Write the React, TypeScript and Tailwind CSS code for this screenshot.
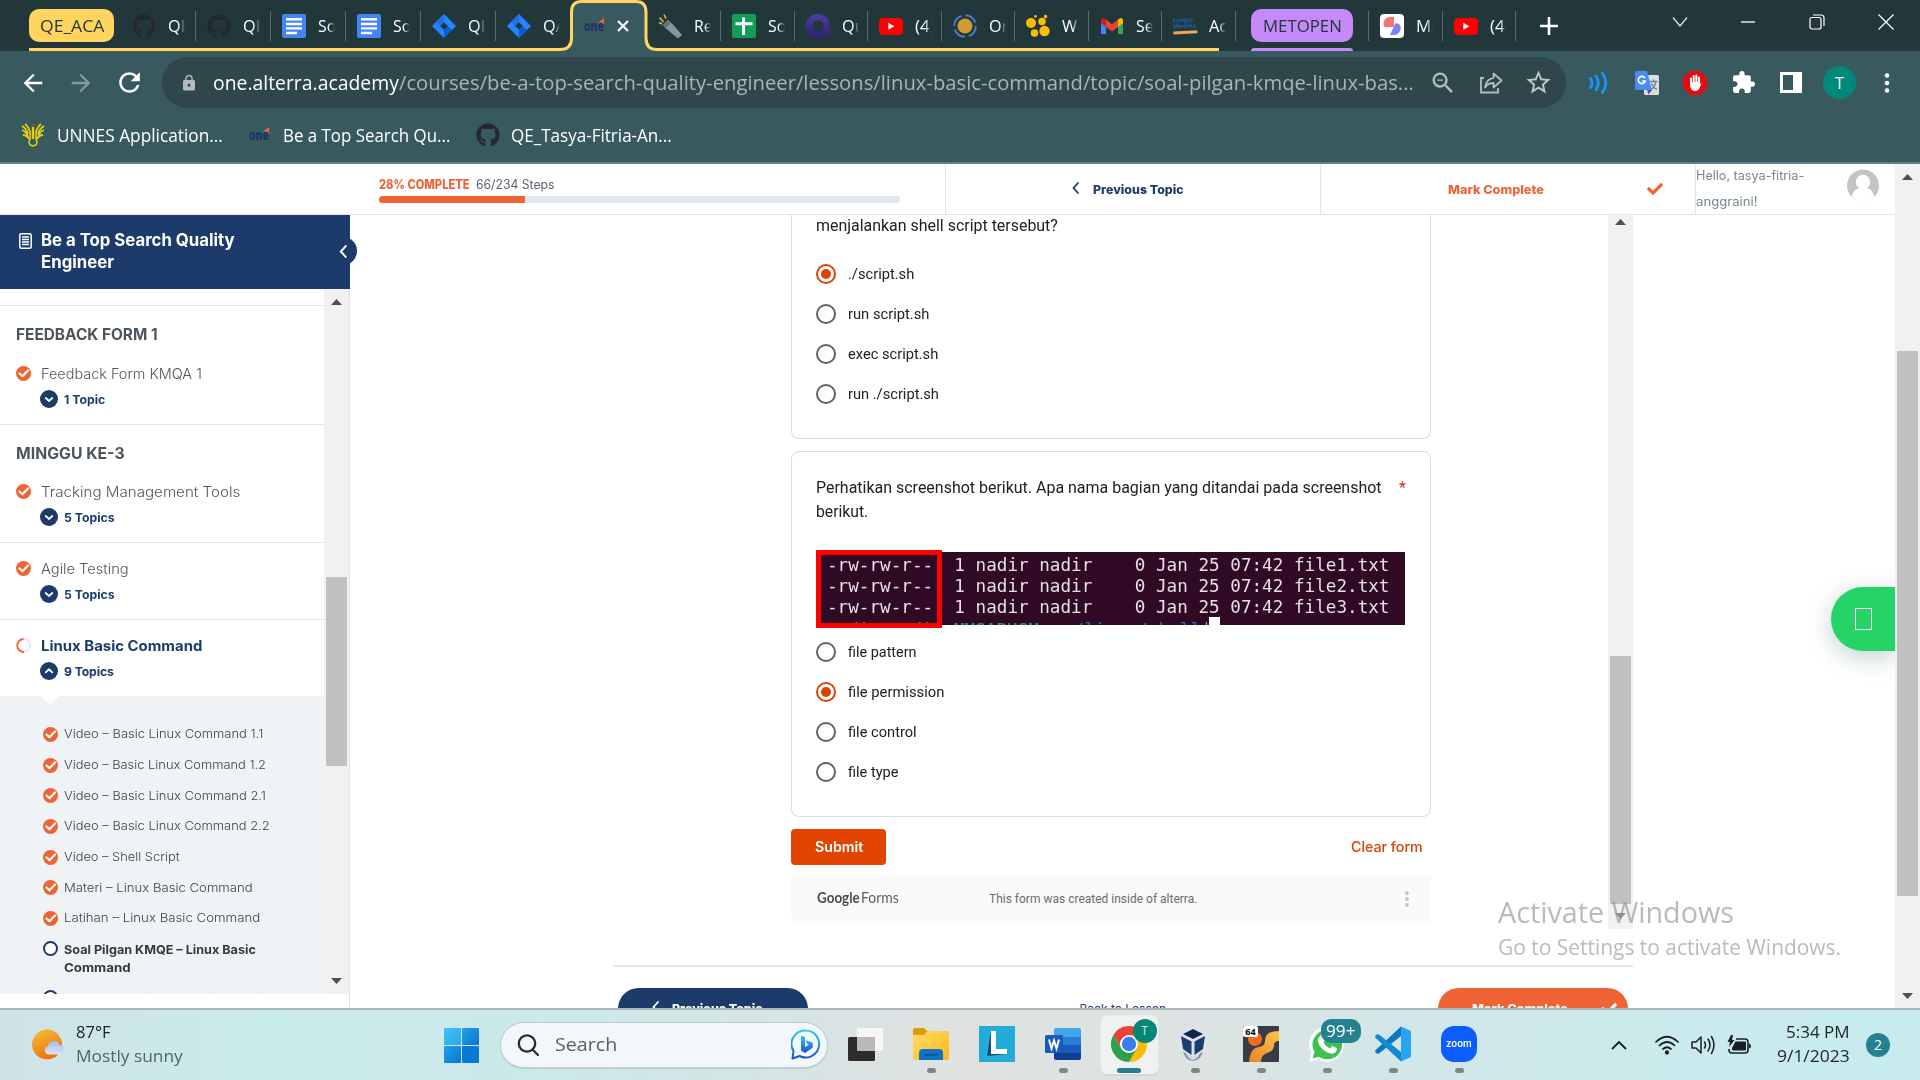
import React, { useLayoutEffect, useRef, useState } from "react";
import { FaGithub, FaCheck } from "react-icons/fa";
import {
  MdArrowBack,
  MdArrowForward,
  MdRefresh,
  MdLock,
  MdZoomOut,
  MdStarBorder,
  MdExtension,
} from "react-icons/md";

/** Single line of text stretched or condensed to a given width. */
function Fit({ w, className = "", children }: { w: number; className?: string; children: React.ReactNode }) {
  const ref = useRef<HTMLSpanElement>(null);
  const [scale, setScale] = useState(1);
  useLayoutEffect(() => {
    if (ref.current && ref.current.offsetWidth > 0) {
      setScale(w / ref.current.offsetWidth);
    }
  }, [w]);
  return (
    <span className={`inline-block shrink-0 whitespace-pre ${className}`} style={{ width: w }}>
      <span ref={ref} className="inline-block origin-left" style={{ transform: `scaleX(${scale})` }}>
        {children}
      </span>
    </span>
  );
}

const SEGOE = "font-['Open_Sans','Noto_Sans',sans-serif]";
const POPPINS = "font-[Inter,'Open_Sans',sans-serif]";
const ROBOTO = "font-[Roboto,'Open_Sans',sans-serif]";

/* ---------- Favicons ---------- */

const GitHub = () => <FaGithub className="size-[24px] text-[#24292f]" />;

const Docs = () => (
  <svg viewBox="0 0 24 24" className="size-[24px]">
    <rect width="24" height="24" rx="2" fill="#4285f4" />
    <path d="M4 5.2h16M4 10h16M4 14.4h16M4 19h11" stroke="#fff" strokeWidth="2.4" />
  </svg>
);

const Jira = () => (
  <svg viewBox="0 0 24 24" className="size-[24px]">
    <path d="M12 0 24 12 12 24 0 12Z" fill="#2684ff" />
    <path d="M12 0v8.4L8.4 12 4 8Z" fill="#1f6fe6" />
    <path d="M12 24v-8.4l3.6-3.6L20 16Z" fill="#0d5bd0" />
    <path d="M12 8.2 15.8 12 12 15.8 8.2 12Z" fill="#22373a" />
  </svg>
);

const One = () => (
  <span className="relative inline-flex h-[20px] w-[23px] items-center">
    <Fit w={20} className="font-['Open_Sans',sans-serif] text-[14px] leading-[18px] font-extrabold text-[#1c3566]">
      one
    </Fit>
    <svg viewBox="0 0 8 8" className="absolute top-[2px] right-[2px] size-[7px]">
      <path d="M0 5 7 0v8L5 5Z" fill="#f0653a" />
    </svg>
  </span>
);

const Flashlight = () => (
  <svg viewBox="0 0 24 24" className="size-[24px]">
    <path d="M4.500 11 10 6l4.500 4 9.500 11-4 3.500L8.500 15Z" fill="#8895a0" />
    <path d="M4.500 11 10 6l2.500 3.500L8 14Z" fill="#66737d" />
    <path d="M1 8.500 4 10M1.500 3.500l4 4.500M6 .5l2 4" stroke="#e8b84a" strokeWidth="1.6" />
  </svg>
);

const Sheets = () => (
  <svg viewBox="0 0 24 24" className="size-[24px]">
    <rect width="24" height="24" rx="2" fill="#0f9d58" />
    <path d="M11.5 3.5V21M3.5 9.8h17" stroke="#fff" strokeWidth="3" />
  </svg>
);

const Qubit = () => (
  <svg viewBox="0 0 24 24" className="size-[24px]">
    <defs>
      <linearGradient id="qb" x1="0" y1="0" x2="0" y2="1">
        <stop offset="0" stopColor="#4a3f9c" />
        <stop offset="1" stopColor="#2d2170" />
      </linearGradient>
    </defs>
    <path d="M12 0a12 12 0 0 1 12 12v12h-3l-3-2A12 12 0 1 1 12 0Z" fill="url(#qb)" />
    <circle cx="12" cy="12" r="5.5" fill="#22373a" />
  </svg>
);

const YouTube = () => (
  <svg viewBox="0 0 24 24" className="size-[24px]">
    <rect y="4" width="24" height="17" rx="4" fill="#f00" />
    <path d="M9.3 8.8v7l6-3.5Z" fill="#fff" />
  </svg>
);

const Ring = () => (
  <svg viewBox="0 0 24 24" className="size-[24px]">
    <circle cx="12" cy="12" r="7.5" fill="#cf9c2f" />
    <circle cx="12" cy="12" r="10.8" fill="none" stroke="#4a7fcb" strokeWidth="1.9" strokeDasharray="13 4" />
  </svg>
);

const Dots = () => (
  <svg viewBox="0 0 24 24" className="size-[24px]" fill="#fbbc04">
    <circle cx="5" cy="9" r="5" />
    <circle cx="16" cy="7.5" r="3.8" />
    <circle cx="8.5" cy="19" r="3.8" />
    <circle cx="18.5" cy="17" r="5.2" />
    <circle cx="9.5" cy="2.4" r="1.4" />
    <circle cx="19.5" cy="2.6" r="1.8" />
  </svg>
);

const Gmail = () => (
  <svg viewBox="0 0 24 24" className="size-[24px]">
    <path d="M1 6v14h5V9Z" fill="#4285f4" />
    <path d="M23 6v14h-5V9Z" fill="#34a853" />
    <path d="M18 5.5 20.5 4Q23 4 23 6.5V9l-5 4Z" fill="#fbbc04" />
    <path d="M1 9V6.5Q1 4 3.500 4L6 5.500V13Z" fill="#c5221f" />
    <path d="M6 13V5.500l6 4.700 6-4.700V13l-6 4.600Z" fill="#ea4335" />
  </svg>
);

const Kampus = () => (
  <span className="flex w-[24px] -rotate-3 flex-col text-[6px] leading-[6px] font-bold text-[#1664b0]">
    <Fit w={20} className="h-[6px]">Kampus</Fit>
    <Fit w={23} className="h-[6px]">Merdeka</Fit>
    <span className="mt-[2px] h-[3px] w-[24px] bg-[#f0a55a]" />
  </span>
);

const Pinwheel = () => (
  <svg viewBox="0 0 24 24" className="size-[24px]">
    <rect width="24" height="24" rx="4" fill="#fff" />
    <path d="M14 3v10H4.500Q2.500 10 4 7 6 3 10 3Z" fill="#f77272" />
    <path d="M10 21l5.500-12 3.500 1Q22 13 20 17q-2 4-6 4Z" fill="#7a82fa" />
  </svg>
);

type TabData = { icon: React.ReactNode; label: string; lw: number; w: string };

const leftTabs: TabData[] = [
  { icon: <GitHub />, label: "QE", lw: 22, w: "w-[75px]" },
  { icon: <GitHub />, label: "QE", lw: 22, w: "w-[75px]" },
  { icon: <Docs />, label: "Soa", lw: 27, w: "w-[75px]" },
  { icon: <Docs />, label: "Soa", lw: 27, w: "w-[75px]" },
  { icon: <Jira />, label: "QE", lw: 22, w: "w-[75px]" },
  { icon: <Jira />, label: "QA", lw: 23, w: "w-[75px]" },
];

const rightTabs: TabData[] = [
  { icon: <Flashlight />, label: "Rec", lw: 26, w: "w-[74px]" },
  { icon: <Sheets />, label: "Soa", lw: 27, w: "w-[74px]" },
  { icon: <Qubit />, label: "Qu", lw: 23, w: "w-[73px]" },
  { icon: <YouTube />, label: "(4)", lw: 20, w: "w-[74px]" },
  { icon: <Ring />, label: "On", lw: 23, w: "w-[73px]" },
  { icon: <Dots />, label: "We", lw: 24, w: "w-[74px]" },
  { icon: <Gmail />, label: "Sea", lw: 26, w: "w-[73px]" },
  { icon: <Kampus />, label: "Aca", lw: 27, w: "w-[74px]" },
];

const lastTabs: TabData[] = [
  { icon: <Pinwheel />, label: "Me", lw: 25, w: "w-[74px]" },
  { icon: <YouTube />, label: "(4)", lw: 20, w: "w-[73px]" },
];

function Tab({ tab, last = false }: { tab: TabData; last?: boolean }) {
  return (
    <div className={`flex h-[30px] shrink-0 items-center pl-[11px] ${tab.w} ${last ? "" : "border-r border-[#5a6b6e]"}`}>
      <span className="flex w-[24px] shrink-0 items-center">{tab.icon}</span>
      <span className="ml-[12px] flex w-[17px] overflow-hidden text-[17px] leading-[28px] text-white [mask-image:linear-gradient(90deg,#000_60%,transparent)]">
        <Fit w={tab.lw}>{tab.label}</Fit>
      </span>
    </div>
  );
}

function TabStrip() {
  return (
    <div className={`relative flex h-[51px] items-center bg-[#22373a] ${SEGOE}`}>
      <div className="ml-[29px] flex h-[33px] w-[85px] items-center justify-center rounded-[10px] bg-[#ffd560] text-[17px] text-[#22373a]">
        <Fit w={64}>QE_ACA</Fit>
      </div>
      <div className="ml-[7px] flex">
        {leftTabs.map((t, i) => (
          <Tab key={i} tab={t} last={i === 5} />
        ))}
      </div>
      <div className="z-10 flex w-[76px] items-center pl-[13px]">
        <One />
        <svg viewBox="0 0 12 12" className="ml-[10px] size-[12px]">
          <path d="M1 1l10 10M11 1 1 11" stroke="#fff" strokeWidth="2.2" />
        </svg>
      </div>
      <div className="flex">
        {rightTabs.map((t, i) => (
          <Tab key={i} tab={t} />
        ))}
      </div>
      <div className="ml-[15px] flex h-[33px] w-[102px] items-center justify-center rounded-[10px] bg-[#c58af9] text-[17px] text-[#22373a]">
        <Fit w={79}>METOPEN</Fit>
      </div>
      <div className="ml-[15px] flex border-l border-[#5a6b6e]">
        {lastTabs.map((t, i) => (
          <Tab key={i} tab={t} />
        ))}
      </div>
      <svg viewBox="0 0 18 18" className="ml-[24px] size-[18px]">
        <path d="M9 0v18M0 9h18" stroke="#fff" strokeWidth="2.6" />
      </svg>
      <div className="mr-[26px] mb-[8px] ml-auto flex items-center">
        <svg viewBox="0 0 16 16" className="mr-[52px] size-[16px]" fill="none" stroke="#e8eded" strokeWidth="1.200">
          <path d="M1 3.500 8 12l7-8.500" />
        </svg>
        <svg viewBox="0 0 16 16" className="mr-[53px] size-[16px]" fill="none" stroke="#fff" strokeWidth="1.300">
          <path d="M1 8h14" />
        </svg>
        <svg viewBox="0 0 16 16" className="mr-[53px] size-[16px]" fill="none" stroke="#fff" strokeWidth="1.200">
          <rect x="1" y="3.500" width="11" height="11.500" rx="2" />
          <path d="M4 1h8q3 0 3 3v8" />
        </svg>
        <svg viewBox="0 0 16 16" className="size-[16px]" fill="none" stroke="#fff" strokeWidth="1.200">
          <path d="M.5.5l15 15M15.500.5l-15 15" />
        </svg>
      </div>
      <svg viewBox="0 0 1326 51" className="absolute top-0 left-[29px] h-[51px] w-[1326px]" fill="none">
        <path d="M527 51q16-1 16-13V12q0-10 10-10h54q10 0 10 10v26q0 12 12 13Z" fill="#38595d" />
        <path
          d="M0 49.500H531Q542.500 49.500 542.500 38V12q0-10.500 10-10.500h54.500q10 0 10 10.500v26q0 11.500 11 11.500H1190"
          stroke="#ffd560"
          strokeWidth="3"
        />
        <path d="M1222 51v-1q1-2 3-2h96q3 0 3 3Z" fill="#c58af9" />
      </svg>
    </div>
  );
}

function Toolbar() {
  return (
    <div className={`flex h-[63px] items-center bg-[#38595d] ${SEGOE}`}>
      <MdArrowBack className="ml-[19px] size-[28px] text-white" />
      <MdArrowForward className="ml-[20px] size-[28px] text-[#839a9d]" />
      <MdRefresh className="ml-[19px] size-[31px] text-white" />
      <div className="ml-[17px] flex h-[51px] w-[1404px] items-center rounded-full bg-[#2f474b] pl-[18px]">
        <MdLock className="size-[18px] text-[#b4babd]" />
        <Fit w={186} className="ml-[15px] text-[20px] leading-[28px] text-white">one.alterra.academy</Fit>
        <Fit w={1015} className="text-[20px] leading-[28px] text-[#a9b5b7]">
          /courses/be-a-top-search-quality-engineer/lessons/linux-basic-command/topic/soal-pilgan-kmqe-linux-bas...
        </Fit>
        <MdZoomOut className="ml-[15px] size-[28px] text-[#b4bdbf]" />
        <svg viewBox="0 0 24 24" className="ml-[22px] size-[24px]" fill="none" stroke="#b4bdbf" strokeWidth="1.800">
          <path d="M5 7H2v14.500h17V17" />
          <path d="M14.500 2.500v4.300Q7 8 6 16.500q3-4.500 8.500-4.500v4.500l8-7Z" strokeLinejoin="round" />
        </svg>
        <MdStarBorder className="ml-[21px] size-[29px] text-[#c0c8ca]" />
      </div>
      <svg viewBox="0 0 20 22" className="ml-[23px] h-[22px] w-[20px]" fill="none" stroke="#1a93fb" strokeWidth="2.900" strokeLinecap="round">
        <path d="M1.500 6.500q3 4.500 0 9M7 4q4.500 7 0 14M13.500 1.500q6.500 9.500 0 19" />
      </svg>
      <svg viewBox="0 0 24 24" className="ml-[26px] size-[24px]">
        <rect x="9" y="4" width="15" height="20" rx="1.500" fill="#dcdfe0" />
        <path d="M1.500 0H12l5 19H1.500Q0 19 0 17.500v-16Q0 0 1.500 0Z" fill="#4b8bf4" />
        <path d="M12 19h5l-3.500 4.500Z" fill="#5b48b8" />
        <path d="M14.500 10.500h8M18.500 8.500v2M21 10.500q-1.500 6-5 8.500M16.500 12.500q2 4.500 5.500 6" stroke="#78808a" strokeWidth="1.300" fill="none" />
        <path d="M10 7.200A3.600 3.600 0 1 0 10.300 10H7.200" stroke="#fff" strokeWidth="1.600" fill="none" />
      </svg>
      <svg viewBox="0 0 24 24" className="ml-[24px] size-[24px]">
        <path d="M7 0h10l7 7v10l-7 7H7l-7-7V7Z" fill="#e40d0d" />
        <path d="M8 13V7.500M10.700 11.500V5M13.400 11.500V4.500M16 12V6.500" stroke="#fff" strokeWidth="2" strokeLinecap="round" />
        <path d="M7 11h10v2l1.800-1.500-1.800 4.500q-1.500 4-5 4-5 0-5-7Z" fill="#fff" />
      </svg>
      <MdExtension className="ml-[24px] size-[25px] text-white" />
      <svg viewBox="0 0 22 21" className="ml-[24px] h-[21px] w-[22px]">
        <path d="M0 0h22v21H0ZM3 3v15h10V3Z" fill="#fff" fillRule="evenodd" />
      </svg>
      <div className="ml-[21px] flex size-[33px] items-center justify-center rounded-full bg-[#00897b] text-[16px] text-white">T</div>
      <svg viewBox="0 0 6 20" className="ml-[28px] h-[20px] w-[6px]" fill="#fff">
        <circle cx="3" cy="2.500" r="2.300" />
        <circle cx="3" cy="10" r="2.300" />
        <circle cx="3" cy="17.500" r="2.300" />
      </svg>
    </div>
  );
}

function Bookmarks() {
  return (
    <div className={`flex h-[50px] items-center border-b-2 border-[#5f8183] bg-[#38595d] pb-[7px] text-[18px] leading-[26px] text-white ${SEGOE}`}>
      <svg viewBox="0 0 24 24" className="ml-[21px] size-[24px]" fill="none" stroke="#e5d20c">
        <path d="M1 3q4 2 6 8M1 7q4 1 6 7M2 12q4 0 6 4M23 3q-4 2-6 8M23 7q-4 1-6 7M22 12q-4 0-6 4M4 1q3 2 5 8M20 1q-3 2-5 8" strokeWidth="1.800" />
        <path d="M9 8v8q-3 6 3 7 6-1 3-7V8" strokeWidth="1.600" />
        <path d="M12 4v12" strokeWidth="2.400" />
        <circle cx="12" cy="2" r="1" stroke="#e33" />
      </svg>
      <Fit w={166} className="ml-[12px]">UNNES Application...</Fit>
      <span className="ml-[26px] flex w-[34px] items-center"><One /></span>
      <Fit w={167}>Be a Top Search Qu...</Fit>
      <span className="ml-[26px]"><GitHub /></span>
      <Fit w={161} className="ml-[11px]">QE_Tasya-Fitria-An...</Fit>
    </div>
  );
}

/* ---------- Course page ---------- */

function Arrow({ down = false, className = "" }: { down?: boolean; className?: string }) {
  return (
    <svg viewBox="0 0 11 6" className={`h-[6px] w-[11px] ${down ? "rotate-180" : ""} ${className}`}>
      <path d="M5.500 0 11 6H0Z" fill="#505050" />
    </svg>
  );
}

const Chevron = ({ className }: { className: string }) => (
  <svg viewBox="0 0 7 12" className={className} fill="none" stroke="currentColor">
    <path d="M6 1 1.500 6 6 11" strokeWidth="1.800" strokeLinecap="round" />
  </svg>
);

function CourseHeader() {
  return (
    <div className={`flex h-[51px] shrink-0 border-b border-[#e2e7ed] ${POPPINS}`}>
      <div className="flex w-[946px] flex-col border-r border-[#e2e7ed] pt-[12px] pl-[379px]">
        <div className="flex h-[18px] items-center text-[12.500px]">
          <Fit w={91} className="font-extrabold text-[#f06334]">28% COMPLETE</Fit>
          <Fit w={78} className="ml-[6px] text-[#5b6570]">66/234 Steps</Fit>
        </div>
        <div className="mt-[2px] h-[7px] w-[521px] overflow-hidden rounded-full bg-[#e2e7ed]">
          <div className="h-full w-[146px] bg-[#f06334]" />
        </div>
      </div>
      <div className="flex w-[375px] items-center border-r border-[#e2e7ed] pl-[126px] text-[#1c3b6b]">
        <Chevron className="mb-[3px] h-[12px] w-[7px]" />
        <Fit w={91} className="mt-[2px] ml-[14px] text-[12px] font-extrabold">Previous Topic</Fit>
      </div>
      <div className="flex w-[375px] items-center border-r border-[#e2e7ed] pl-[127px] text-[#f06334]">
        <Fit w={96} className="mt-[2px] text-[12px] font-extrabold">Mark Complete</Fit>
        <FaCheck className="mb-[1px] ml-[103px] size-[16px]" />
      </div>
      <div className="flex flex-1 text-[12.500px] leading-[26px] text-[#78888f]">
        <div className="-mt-px flex w-[151px] flex-col">
          <Fit w={108} className="h-[26px]">Hello, tasya-fitria-</Fit>
          <Fit w={62} className="h-[26px]">anggraini!</Fit>
        </div>
        <svg viewBox="0 0 32 32" className="mt-[5px] size-[32px]">
          <clipPath id="av"><circle cx="16" cy="16.500" r="16" /></clipPath>
          <g clipPath="url(#av)">
            <rect width="32" height="32" fill="#c4c4c4" />
            <circle cx="16" cy="13" r="7.200" fill="#fff" />
            <path d="M4 34q0-13 8-15h8q8 2 8 15Z" fill="#fff" />
          </g>
        </svg>
      </div>
    </div>
  );
}

const CheckDot = () => (
  <svg viewBox="0 0 15 15" className="size-[15px] shrink-0">
    <circle cx="7.500" cy="7.500" r="7.500" fill="#f06334" />
    <path d="M3.500 7.500 6.500 10.300 12 4.500" fill="none" stroke="#fff" strokeWidth="2.200" strokeLinecap="round" strokeLinejoin="round" />
  </svg>
);

const OutlineDot = () => (
  <span className="size-[15px] shrink-0 rounded-full border-2 border-[#1c3b6b] bg-white" />
);

function Lesson({
  title,
  w,
  topics,
  tw,
  current = false,
}: {
  title: string;
  w: number;
  topics: string;
  tw: number;
  current?: boolean;
}) {
  return (
    <div className="pb-[12px]">
      <div className="flex h-[24px] items-center pb-[1px] pl-[16px]">
        {current ? (
          <svg viewBox="0 0 15 15" className="size-[15px]" fill="none" strokeWidth="1.800">
            <circle cx="7.500" cy="7.500" r="6.500" stroke="#e2e7ed" />
            <path d="M8 14A6.500 6.500 0 0 1 7.500 1" stroke="#f06334" />
          </svg>
        ) : (
          <CheckDot />
        )}
        <Fit
          w={w}
          className={`ml-[10px] text-[14px] ${current ? "font-bold text-[#1c3b6b]" : "font-light text-[#4f575f]"}`}
        >
          {title}
        </Fit>
      </div>
      <div className="flex h-[26px] items-center pl-[40px]">
        <svg viewBox="0 0 18 18" className="size-[18px]">
          <circle cx="9" cy="9" r="9" fill="#1c3b6b" />
          <path
            d={current ? "M5.700 10.300 9 7.300l3.300 3" : "M5.700 8 9 11l3.300-3"}
            fill="none"
            stroke="#fff"
            strokeWidth="1.800"
            strokeLinecap="round"
          />
        </svg>
        <Fit w={tw} className="mt-[2px] ml-[6px] text-[12px] font-bold text-[#1c3b6b]">{topics}</Fit>
      </div>
    </div>
  );
}

const topicList = [
  { t: "Video – Basic Linux Command 1.1", w: 199 },
  { t: "Video – Basic Linux Command 1.2", w: 202 },
  { t: "Video – Basic Linux Command 2.1", w: 202 },
  { t: "Video – Basic Linux Command 2.2", w: 206 },
  { t: "Video – Shell Script", w: 116 },
  { t: "Materi – Linux Basic Command", w: 189 },
  { t: "Latihan – Linux Basic Command", w: 196 },
];

function Sidebar() {
  return (
    <aside className={`relative h-[793px] w-[350px] shrink-0 border-r border-[#e2e4e8] ${POPPINS}`}>
      <span className="absolute top-[22px] left-[329px] size-[28px] rounded-full bg-[#1c3b6b]" />
      <div className="relative flex h-[74px] w-[350px] bg-[#1c3b6b] pt-[14px] pl-[19px] text-white">
        <svg viewBox="0 0 13 16" className="mt-[4px] h-[16px] w-[13px]">
          <rect x=".8" y=".8" width="11.400" height="14.400" rx="1.500" fill="none" stroke="#fff" strokeWidth="1.500" />
          <path d="M3 4h7M3 6.500h7M3 9h7M3 11.500h7" stroke="#fff" strokeWidth="1.300" />
        </svg>
        <div className="ml-[9px] flex flex-col text-[17px] leading-[22px] font-bold">
          <Fit w={194} className="h-[22px]">Be a Top Search Quality</Fit>
          <Fit w={73} className="h-[22px]">Engineer</Fit>
        </div>
        <Chevron className="absolute top-[30px] left-[339px] h-[13px] w-[8px]" />
      </div>
      <div className="flex h-[705px] overflow-hidden">
        <div className="w-[324px]">
          <div className="h-[17px] border-b border-[#e2e7ed]" />
          <div className="border-b border-[#e2e7ed]">
            <div className="flex h-[56px] items-center pt-[1px] pl-[16px] text-[15.500px] font-bold text-[#4c545c]">
              <Fit w={142}>FEEDBACK FORM 1</Fit>
            </div>
            <Lesson title="Feedback Form KMQA 1" w={161} topics="1 Topic" tw={41} />
          </div>
          <div className="border-b border-[#e2e7ed]">
            <div className="flex h-[55px] items-center pt-[3px] pl-[16px] text-[15.500px] font-bold text-[#4c545c]">
              <Fit w={109}>MINGGU KE-3</Fit>
            </div>
            <Lesson title="Tracking Management Tools" w={199} topics="5 Topics" tw={51} />
          </div>
          <div className="border-b border-[#e2e7ed] pt-[14px]">
            <Lesson title="Agile Testing" w={88} topics="5 Topics" tw={51} />
          </div>
          <div className="pt-[14px]">
            <Lesson title="Linux Basic Command" w={161} topics="9 Topics" tw={50} current />
          </div>
          <div className="relative h-[298px] overflow-hidden bg-[#eff3f6] pt-[23px] text-[12.300px] text-[#3c444b]">
            <svg viewBox="0 0 18 9" className="absolute top-0 left-[41px] h-[9px] w-[18px]">
              <path d="M0 0h18L9 9Z" fill="#fff" />
            </svg>
            {topicList.map((x) => (
              <div key={x.t} className="flex h-[30.700px] items-center pl-[43px]">
                <CheckDot />
                <Fit w={x.w} className="ml-[6px] font-light">{x.t}</Fit>
              </div>
            ))}
            <div className="mt-[7px] flex pl-[43px] leading-[18px] font-bold text-[#33393f]">
              <OutlineDot />
              <div className="ml-[6px] flex flex-col">
                <Fit w={192} className="h-[18px]">Soal Pilgan KMQE – Linux Basic</Fit>
                <Fit w={67} className="h-[18px]">Command</Fit>
              </div>
            </div>
            <div className="mt-[13px] flex pl-[43px] leading-[18px] font-light">
              <OutlineDot />
              <Fit w={202} className="ml-[6px]">Resume Materi KMQE – Linux Basic</Fit>
            </div>
          </div>
        </div>
        <div className="flex w-[25px] flex-col items-center bg-[#f1f1f1]">
          <Arrow className="mt-[10px]" />
          <div className="mt-[272px] h-[189px] w-[21px] bg-[#c1c1c1]" />
          <Arrow down className="mt-[212px]" />
        </div>
      </div>
    </aside>
  );
}

function Option({ label, w, on = false }: { label: string; w: number; on?: boolean }) {
  return (
    <div className="flex h-[40px] items-center">
      <span className={`flex size-[20px] items-center justify-center rounded-full border-2 ${on ? "border-[#db4300]" : "border-[#5f6368]"}`}>
        {on && <span className="size-[10px] rounded-full bg-[#db4300]" />}
      </span>
      <Fit w={w} className="ml-[11.500px] text-[14px] text-[#202124]">{label}</Fit>
    </div>
  );
}

function Terminal() {
  return (
    <div className="relative mt-[26px] h-[78px] w-[589px] pt-[2px] font-['DejaVu_Sans_Mono',monospace]">
      <div className="h-[73px] overflow-hidden bg-[#300a24] pt-[3px] pl-[11px] text-[17px] text-[#e6dfe3]">
        {[1, 2, 3].map((n) => (
          <div key={n} className="h-[21px] leading-[21px]">
            <Fit w={562}>{`-rw-rw-r--  1 nadir nadir    0 Jan 25 07:42 file${n}.txt`}</Fit>
          </div>
        ))}
        <div className="flex h-[21px] leading-[24px]">
          <Fit w={127} className="text-[#26a269]">{"nadir@nadir "}</Fit>
          <Fit w={85} className="text-[#26a269]">MMSARUSM</Fit>
          <Fit w={138} className="ml-[24px] text-[#2a6ac0]">~/linux/shell</Fit>
          <span className="w-[8px]">$</span>
          <span className="z-10 mt-[-1px] h-[12px] w-[11px] bg-white" />
        </div>
      </div>
      <div className="absolute top-0 left-0 h-[78px] w-[126px] border-5 border-[#f00]" />
    </div>
  );
}

function FormFrame() {
  return (
    <div className={`ml-[263px] flex h-[714px] w-[1020px] shrink-0 ${ROBOTO}`}>
      <div className="w-[995px] pl-[178px]">
        <div className="h-[224px] w-[640px] rounded-b-[8px] border border-t-0 border-[#dadce0] px-[24px]">
          <div className="flex h-[22px] items-center text-[16px] text-[#202124]">
            <Fit w={242}>menjalankan shell script tersebut?</Fit>
          </div>
          <div className="mt-[17px]">
            <Option label="./script.sh" w={66} on />
            <Option label="run script.sh" w={81} />
            <Option label="exec script.sh" w={90} />
            <Option label="run ./script.sh" w={91} />
          </div>
        </div>
        <div className="mt-[12px] h-[366px] w-[640px] rounded-[8px] border border-[#dadce0] px-[24px] pt-[24px]">
          <div className="flex text-[16px] leading-[24px] text-[#202124]">
            <div className="flex flex-col">
              <Fit w={566} className="h-[24px]">
                Perhatikan screenshot berikut. Apa nama bagian yang ditandai pada screenshot
              </Fit>
              <Fit w={52} className="h-[24px]">berikut.</Fit>
            </div>
            <span className="ml-[17px] text-[#d93025]">*</span>
          </div>
          <Terminal />
          <div className="mt-[4px]">
            <Option label="file pattern" w={69} />
            <Option label="file permission" w={96} on />
            <Option label="file control" w={69} />
            <Option label="file type" w={51} />
          </div>
        </div>
        <div className="mt-[12px] flex h-[36px] w-[640px] items-center text-[14.500px]">
          <div className="flex h-[36px] w-[95px] items-center justify-center rounded-[4px] bg-[#e04400] text-white">
            <Fit w={48} className="mb-[1px] font-[Inter,sans-serif] font-semibold">Submit</Fit>
          </div>
          <Fit w={72} className="mr-[8px] mb-px ml-auto font-[Inter,sans-serif] text-[14px] font-medium text-[#db4300]">Clear form</Fit>
        </div>
        <div className="mt-[10px] flex h-[48px] w-[640px] items-center rounded-b-[8px] bg-[#fafafa] text-[#5c5f63]">
          <div className="mb-[3px] ml-[26px] flex font-[Lato,sans-serif] text-[15px]">
            <Fit w={43} className="font-bold text-[#4a4d51]">Google</Fit>
            <Fit w={38} className="ml-px">Forms</Fit>
          </div>
          <Fit w={208} className="ml-[90px] text-[12px] text-[#6a6d70]">This form was created inside of alterra.</Fit>
          <svg viewBox="0 0 4 16" className="ml-[208px] h-[16px] w-[4px]" fill="#c4c6c8">
            <circle cx="2" cy="2" r="1.900" />
            <circle cx="2" cy="8" r="1.900" />
            <circle cx="2" cy="14" r="1.900" />
          </svg>
        </div>
      </div>
      <div className="flex w-[25px] flex-col items-center bg-[#f1f1f1]">
        <Arrow className="mt-[4px]" />
        <div className="mt-[431px] h-[248px] w-[21px] bg-[#c1c1c1]" />
        <Arrow down className="mt-[9px] opacity-60" />
      </div>
    </div>
  );
}

function Main() {
  return (
    <main className="flex h-[793px] flex-1 flex-col overflow-hidden">
      <FormFrame />
      <div className="mt-[36px] ml-[263px] h-[2px] w-[1020px] shrink-0 bg-[#e2e7ed]" />
      <div className={`mt-[21px] ml-[268px] flex h-[41px] w-[1010px] shrink-0 items-center justify-between text-[12px] font-extrabold ${POPPINS}`}>
        <div className="flex h-full w-[190px] items-center rounded-full bg-[#1c3b6b] pl-[34px] text-white">
          <Chevron className="mb-[3px] h-[12px] w-[7px]" />
          <Fit w={91} className="ml-[13px]">Previous Topic</Fit>
        </div>
        <Fit w={87} className="font-normal text-[#1c3b6b]">Back to Lesson</Fit>
        <div className="flex h-full w-[190px] items-center rounded-full bg-[#f06334] pl-[34px] text-white">
          <Fit w={96}>Mark Complete</Fit>
          <FaCheck className="ml-[33px] size-[16px]" />
        </div>
      </div>
    </main>
  );
}

function Page() {
  return (
    <div className="relative flex h-[844px] overflow-hidden bg-white">
      <div className="flex w-[1895px] flex-col">
        <CourseHeader />
        <div className="flex">
          <Sidebar />
          <Main />
        </div>
      </div>
      <div className="z-10 flex w-[25px] flex-col items-center bg-[#f1f1f1]">
        <Arrow className="mt-[10px]" />
        <div className="mt-[171px] h-[545px] w-[21px] bg-[#c1c1c1]" />
        <Arrow down className="mt-[97px]" />
      </div>
      <div className="absolute top-[423px] left-[1831px] flex h-[64px] w-[64px] items-center rounded-l-[32px] bg-[#25d366] pl-[24px] shadow-[0_6px_24px_rgba(30,90,90,0.28)]">
        <span className="h-[22px] w-[17px] border border-white" />
      </div>
      <div className={`absolute top-[728px] left-[1498px] z-20 flex flex-col text-[#8c8c8c]/60 ${SEGOE}`}>
        <Fit w={236} className="h-[40px] text-[29px] leading-[40px]">Activate Windows</Fit>
        <Fit w={343} className="h-[30px] text-[21px] leading-[30px]">Go to Settings to activate Windows.</Fit>
      </div>
    </div>
  );
}

/* ---------- Taskbar ---------- */

function TaskItem({ children, dot = true, active = false }: { children: React.ReactNode; dot?: boolean; active?: boolean }) {
  return (
    <div className="flex w-[66px] shrink-0 justify-center">
      <div
        className={`relative flex h-[58px] w-[57px] flex-col items-center rounded-[6px] pt-[10px] ${
          active ? "bg-white/55 shadow-[0_0_0_1px_rgba(255,255,255,0.4),0_1px_2px_rgba(0,0,0,0.2)]" : ""
        }`}
      >
        <div className="flex h-[36px] items-center">{children}</div>
        {dot && <span className={`mt-[6px] h-[5px] rounded-full ${active ? "w-[24px] bg-[#24808f]" : "w-[9px] bg-[#7d8788]"}`} />}
      </div>
    </div>
  );
}

const TaskView = () => (
  <svg viewBox="0 0 36 36" className="size-[36px]">
    <rect x="1" y="11" width="27" height="24" rx="1.500" fill="#2c2c2a" />
    <rect x="10" y="2" width="26" height="23" rx="1.500" fill="#f6f6f6" />
    <path d="M10 11h18v14H11.500Q10 25 10 23.500Z" fill="#b9b9b8" />
  </svg>
);

const Folder = () => (
  <svg viewBox="0 0 36 36" className="size-[36px]">
    <defs>
      <linearGradient id="fo" x1="0" y1="0" x2="1" y2="1">
        <stop offset="0" stopColor="#ffdc6a" />
        <stop offset="1" stopColor="#fcba18" />
      </linearGradient>
    </defs>
    <path d="M0 4q0-2 2-2h9l4 4h-2v6H0Z" fill="#dd9b07" />
    <path d="M0 9h11l4-4h19q2 0 2 2v25q0 2-2 2H2q-2 0-2-2Z" fill="url(#fo)" />
    <path d="M6 34V27q0-4 4-4h16q4 0 4 4v7Z" fill="#1173c6" />
    <path d="M11 29h14" stroke="#0a4f93" strokeWidth="1.500" />
  </svg>
);

const LApp = () => (
  <svg viewBox="0 0 36 36" className="size-[36px]">
    <rect width="36" height="36" fill="#24acd9" />
    <path d="M12 5 8 30l20-2H15Z" fill="#134a7d" />
    <path d="M12 5h5v18h11v5H12Z" fill="#fff" />
  </svg>
);

const Word = () => (
  <svg viewBox="0 0 36 36" className="size-[36px]">
    <path d="M9 4q0-2 2-2h23q2 0 2 2v7H9Z" fill="#41a5ee" />
    <path d="M9 11h27v8H9Z" fill="#2b7cd3" />
    <path d="M9 19h27v8H9Z" fill="#185abd" />
    <path d="M9 27h27v5q0 2-2 2H11q-2 0-2-2Z" fill="#103f91" />
    <rect y="9" width="18" height="18" rx="1.500" fill="#185abd" />
    <path d="M4 13.500l2.500 9L9 14.500l2.500 8 2.500-9" fill="none" stroke="#fff" strokeWidth="2" />
  </svg>
);

const ChromeIcon = () => (
  <svg viewBox="0 0 36 36" className="size-[36px]">
    <path d="M18 18 2.400 9A18 18 0 0 1 33.600 9H18Z" fill="#ea4335" />
    <path d="M18 9h15.600A18 18 0 0 1 18 36l7.800-13.500Z" fill="#fbbc04" />
    <path d="M2.400 9l7.800 13.500L18 9Z" fill="#ea4335" />
    <path d="M2.400 9l7.800 13.500 7.800 4.500 7.800-4.500L18 36A18 18 0 0 1 2.400 9Z" fill="#2fa04e" />
    <circle cx="18" cy="18" r="9" fill="#fff" />
    <circle cx="18" cy="18" r="7.200" fill="#3a7cec" />
  </svg>
);

const VBox = () => (
  <svg viewBox="0 0 36 36" className="mr-[4px] size-[36px]">
    <path d="M8 24q1 10 10 11 9-1 10-11Z" fill="#8d97ab" />
    <path d="M12 27q2 5 6 6 4-1 6-6" fill="none" stroke="#e6eaf2" strokeWidth="1.500" />
    <path d="M18 1 32 8l-2 16-12 8L6 24 4 8Z" fill="#dfe5f0" />
    <path d="M18 3 28 8l-10 5L8 8Z" fill="#10264d" />
    <path d="M6 10l10.500 5.500V29L8 23Z" fill="#1d3d70" />
    <path d="M30 10l-10.500 5.500V29L28 23Z" fill="#1d3d70" />
  </svg>
);

const Nox64 = () => (
  <span className="relative block size-[36px]">
    <svg viewBox="0 0 36 36" className="size-[36px]">
      <defs>
        <linearGradient id="nx" x1="0" y1="1" x2="1" y2="0">
          <stop offset="0" stopColor="#e8842a" />
          <stop offset="1" stopColor="#ffc44a" />
        </linearGradient>
      </defs>
      <rect width="36" height="36" rx="1" fill="#393b47" />
      <circle cx="12" cy="13" r="7" fill="#f56a1c" />
      <path d="M36 5q-14 0-14 10 0 5-6 6-9 1-10 15h12q0-7 6-9 7-2 7-8 0-4 5-4Z" fill="url(#nx)" />
    </svg>
    <span className="absolute top-0 left-0 flex h-[11px] w-[15px] items-center justify-center rounded-[2px] bg-white text-[9px] font-bold text-black">64</span>
  </span>
);

const WhatsApp = () => (
  <svg viewBox="0 0 36 36" className="size-[36px]">
    <path d="M0 36l2.500-9A17.500 17.500 0 1 1 9 33.500Z" fill="#fff" />
    <path d="M3.500 32.500l2-6.500A14.800 14.800 0 1 1 10 30.800Z" fill="#3fc151" />
    <path d="M11 10q2-2.500 3.500 0l1.500 3.500q.3 1-1.500 3 2 4 6.500 6 2-2.800 3-2.300l3.500 1.800q1 .5 0 3-2 3.300-6 2.500Q11.500 24.500 9 16q-.6-3.500 2-6Z" fill="#fff" />
  </svg>
);

const VSCode = () => (
  <svg viewBox="0 0 36 36" className="size-[36px]">
    <path d="M26 .5 35 4.500q1 .5 1 2v23q0 1.500-1 2L26 35.500Z" fill="#27a5f3" />
    <path d="M26 .5V10L4 27.500q-1.300.8-2.300 0l-1.200-1.300q-1-1.200.2-2.300Z" fill="#0f76bf" />
    <path d="M26 35.500V26L4 8.500q-1.300-.8-2.300 0L.5 9.800q-1 1.200.2 2.300Z" fill="#1289d2" />
  </svg>
);

const Weather = () => (
  <svg viewBox="0 0 34 32" className="h-[32px] w-[34px]">
    <defs>
      <linearGradient id="sn" x1="0.200" y1="0" x2="0.700" y2="1">
        <stop offset="0" stopColor="#f2bd35" />
        <stop offset="1" stopColor="#f0690f" />
      </linearGradient>
      <linearGradient id="cl" x1="0" y1="0" x2="0" y2="1">
        <stop offset="0" stopColor="#a6bdf0" />
        <stop offset="1" stopColor="#dbe6fb" />
      </linearGradient>
    </defs>
    <circle cx="15" cy="15.500" r="15" fill="url(#sn)" />
    <path d="M16 25.500a4.500 4.500 0 0 1 0-8.500 6 6 0 0 1 11.500-1 4.800 4.800 0 0 1 1.500 9.500Z" fill="url(#cl)" />
  </svg>
);

const BingIcon = () => (
  <svg viewBox="0 0 30 31" className="h-[31px] w-[30px]">
    <defs>
      <linearGradient id="bg" x1="0" y1="0" x2="0" y2="1">
        <stop offset="0" stopColor="#35c6ee" />
        <stop offset="1" stopColor="#1a52c8" />
      </linearGradient>
    </defs>
    <path d="M15 1.500a13.500 13.500 0 1 1-6.500 25.500L1.500 29.500 2.500 22A13.500 13.500 0 0 1 15 1.500Z" fill="#f2f9fc" stroke="url(#bg)" strokeWidth="2" strokeLinejoin="round" />
    <path d="M10 6.500 14 8v10l4-2.500-2-1-1.300-3.300 7 2.600v5L14 24l-4-2.500Z" fill="url(#bg)" />
  </svg>
);

function Taskbar() {
  return (
    <div
      className={`relative flex h-[72px] items-center border-t-2 border-[#a9b7b8] bg-[linear-gradient(90deg,#cfe3e6_0%,#c8ebec_14%,#cde8e9_30%,#d7e4e4_42%,#dfe2e1_50%,#dde3e2_62%,#d3e6e7_72%,#c9ebed_88%,#c8ebee_100%)] text-[#1d2425] ${SEGOE}`}
    >
      <div className="flex w-[412px] items-center pl-[32px]">
        <Weather />
        <div className="mb-[2px] ml-[10px] flex flex-col text-[17px] leading-[24px]">
          <Fit w={35} className="h-[24px]">87°F</Fit>
          <Fit w={107} className="h-[24px] text-[#566162]">Mostly sunny</Fit>
        </div>
      </div>
      <svg viewBox="0 0 35 35" className="ml-[32px] size-[35px]">
        <defs>
          <linearGradient id="wn" x1="0" y1="0" x2="1" y2="1">
            <stop offset="0" stopColor="#40c4f7" />
            <stop offset="1" stopColor="#2aa4ea" />
          </linearGradient>
          <linearGradient id="wm" x1="0" y1="0" x2="1" y2="1">
            <stop offset="0" stopColor="#25a3e9" />
            <stop offset="1" stopColor="#0873d0" />
          </linearGradient>
        </defs>
        <rect width="17" height="17" rx="1" fill="url(#wn)" />
        <rect x="18" width="17" height="17" rx="1" fill="url(#wm)" />
        <rect y="18" width="17" height="17" rx="1" fill="url(#wm)" />
        <rect x="18" y="18" width="17" height="17" rx="1" fill="#087ad6" />
      </svg>
      <div className="ml-[21px] flex h-[47px] w-[328px] items-center rounded-full border border-b-2 border-[#bccdce] bg-[#f2f8f9] pl-[16px]">
        <svg viewBox="0 0 22 22" className="size-[22px]" fill="none" stroke="#272b2c" strokeWidth="2.300">
          <circle cx="10" cy="9.500" r="8.200" />
          <path d="M15.500 15.500 21 21" strokeLinecap="round" />
        </svg>
        <Fit w={62} className="mb-[1px] ml-[16px] text-[19px] leading-[26px] text-[#596061]">Search</Fit>
        <span className="mr-[6px] ml-auto"><BingIcon /></span>
      </div>
      <div className="ml-[4px] flex">
        <TaskItem dot={false}><TaskView /></TaskItem>
        <TaskItem><Folder /></TaskItem>
        <TaskItem dot={false}><LApp /></TaskItem>
        <TaskItem><Word /></TaskItem>
        <TaskItem active>
          <ChromeIcon />
          <span className="absolute top-[3px] left-[32px] flex size-[24px] items-center justify-center rounded-full bg-[#078677] text-[12px] text-white/80">T</span>
        </TaskItem>
        <TaskItem><VBox /></TaskItem>
        <TaskItem><Nox64 /></TaskItem>
        <TaskItem>
          <WhatsApp />
          <span className="absolute top-[3px] left-[22px] flex h-[24px] w-[40px] items-center justify-center rounded-[10px] bg-[#25818f] text-[16px] text-white">
            <Fit w={29}>99+</Fit>
          </span>
        </TaskItem>
        <TaskItem><VSCode /></TaskItem>
        <TaskItem>
          <span className="flex size-[36px] items-center justify-center rounded-[13px] bg-[#0c5cff]">
            <Fit w={26} className="mb-[2px] font-[Inter,sans-serif] text-[10px] font-semibold text-white">zoom</Fit>
          </span>
        </TaskItem>
      </div>
      <div className="ml-[119px] flex items-center">
        <svg viewBox="0 0 16 9" className="h-[9px] w-[16px]" fill="none" stroke="#1a1f20" strokeWidth="1.800">
          <path d="M1 8 8 1l7 7" />
        </svg>
        <svg viewBox="0 0 24 20" className="ml-[28px] h-[20px] w-[24px]" fill="none" stroke="#1a1f20" strokeWidth="1.700" strokeLinecap="round">
          <path d="M1 7Q12-3.500 23 7M4.500 10.500q7.500-7 15 0M8 14q4-3.500 8 0" />
          <circle cx="12" cy="17.500" r="1.300" fill="#1a1f20" />
        </svg>
        <svg viewBox="0 0 24 20" className="ml-[12px] h-[20px] w-[24px]" fill="none" stroke="#1a1f20" strokeWidth="1.500" strokeLinecap="round" strokeLinejoin="round">
          <path d="M1 7h4l5-5v16l-5-5H1ZM13.500 7q2 3 0 6M17 4q4 6 0 12M20.500 1.500q5 8.500 0 17" />
        </svg>
        <svg viewBox="0 0 24 20" className="ml-[12px] h-[20px] w-[24px]">
          <path d="M9 4h9q3 0 3 3v8q0 3-3 3H5q-3 0-3-3v-1" fill="none" stroke="#1a1f20" strokeWidth="1.600" />
          <path d="M8.500 6.500H18q1 0 1 1v7q0 1-1 1H6q-1 0-1-1V13Z" fill="#1a1f20" />
          <path d="M22 8.500q2 .5 2 2.500t-2 2.500Z" fill="#1a1f20" />
          <path d="M4 0 .5 7H3L2 12 7.500 5H5L6 0Z" fill="#1a1f20" />
        </svg>
      </div>
      <div className="mb-[2px] ml-[26px] flex w-[73px] flex-col items-end text-[16.500px] leading-[24px]">
        <Fit w={64} className="h-[24px]">5:34 PM</Fit>
        <Fit w={73} className="h-[24px]">9/1/2023</Fit>
      </div>
      <div className="mb-[1px] ml-[16px] flex size-[24px] items-center justify-center rounded-full bg-[#25818f] text-[14px] text-white">2</div>
    </div>
  );
}

export default function App() {
  return (
    <div className="flex h-[1080px] w-[1920px] flex-col overflow-hidden bg-white">
      <TabStrip />
      <Toolbar />
      <Bookmarks />
      <Page />
      <Taskbar />
    </div>
  );
}
